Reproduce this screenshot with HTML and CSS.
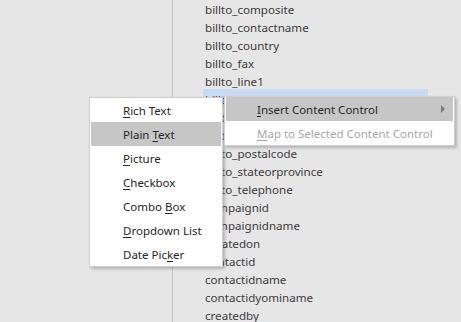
FILE: index.html
```html
<!DOCTYPE html>
<html>
<head>
<meta charset="utf-8">
<link rel="stylesheet" href="styles.css">
</head>
<body>
<div class="screen">
  <div class="left-pane"></div>
  <div class="list-pane">
    <ul class="field-list">
      <li class="row">billto_composite</li>
      <li class="row">billto_contactname</li>
      <li class="row">billto_country</li>
      <li class="row">billto_fax</li>
      <li class="row">billto_line1</li>
      <li class="row selected">billto_line2</li>
      <li class="row">billto_line3</li>
      <li class="row">billto_name</li>
      <li class="row">billto_postalcode</li>
      <li class="row">billto_stateorprovince</li>
      <li class="row">billto_telephone</li>
      <li class="row">campaignid</li>
      <li class="row">campaignidname</li>
      <li class="row">createdon</li>
      <li class="row">contactid</li>
      <li class="row">contactidname</li>
      <li class="row">contactidyominame</li>
      <li class="row">createdby</li>
    </ul>
  </div>

  <div class="menu control-menu">
    <div class="item"><u>R</u>ich Text</div>
    <div class="item active">Plain <u>T</u>ext</div>
    <div class="item"><u>P</u>icture</div>
    <div class="item"><u>C</u>heckbox</div>
    <div class="item">Combo <u>B</u>ox</div>
    <div class="item"><u>D</u>ropdown List</div>
    <div class="item">Date Pic<u>k</u>er</div>
  </div>

  <div class="menu context-menu">
    <div class="item active has-sub"><u>I</u>nsert Content Control<span class="arrow"></span></div>
    <div class="item disabled"><u>M</u>ap to Selected Content Control</div>
  </div>
</div>
</body>
</html>
```
FILE: styles.css
```css
html, body {
  margin: 0;
  padding: 0;
}
body {
  background: #e6e6e6;
  font-family: "Noto Sans", "Open Sans", sans-serif;
}
.screen {
  position: relative;
  width: 461px;
  height: 322px;
  overflow: hidden;
  display: flex;
  background: #e6e6e6;
}
.left-pane {
  width: 172px;
  flex: none;
  border-right: 1px solid #c4c4c4;
}
.list-pane {
  flex: 1;
  padding-left: 30px;
}
.field-list {
  list-style: none;
  margin: -1px 0 0 0;
  padding: 0;
  width: 225px;
}
.row {
  height: 18px;
  line-height: 21px;
  padding-left: 2px;
  font-size: 11.6px;
  color: #3e3a3e;
  white-space: nowrap;
}
.row.selected {
  background: #c8dcf5;
}
.menu {
  position: absolute;
  background: #ffffff;
  border: 1px solid #cfcfcf;
  box-shadow: 2px 2px 3px rgba(0, 0, 0, 0.22);
  padding: 0 1px;
  font-size: 11.5px;
  color: #262626;
}
.control-menu {
  left: 89px;
  top: 97px;
  width: 130px;
}
.context-menu {
  left: 224px;
  top: 96px;
  width: 227px;
}
.item {
  position: relative;
  height: 24px;
  line-height: 25px;
  padding-left: 32px;
  white-space: nowrap;
}
.context-menu .item {
  padding-left: 31px;
}
.item.active {
  background: #c6c6c6;
}
.item.disabled {
  color: #a6a6a6;
}
.item u {
  text-decoration-thickness: 1px;
  text-underline-offset: 2px;
}
.arrow {
  position: absolute;
  right: 8px;
  top: 8px;
  width: 0;
  height: 0;
  border-left: 4px solid #7a7a7a;
  border-top: 4px solid transparent;
  border-bottom: 4px solid transparent;
}
```
